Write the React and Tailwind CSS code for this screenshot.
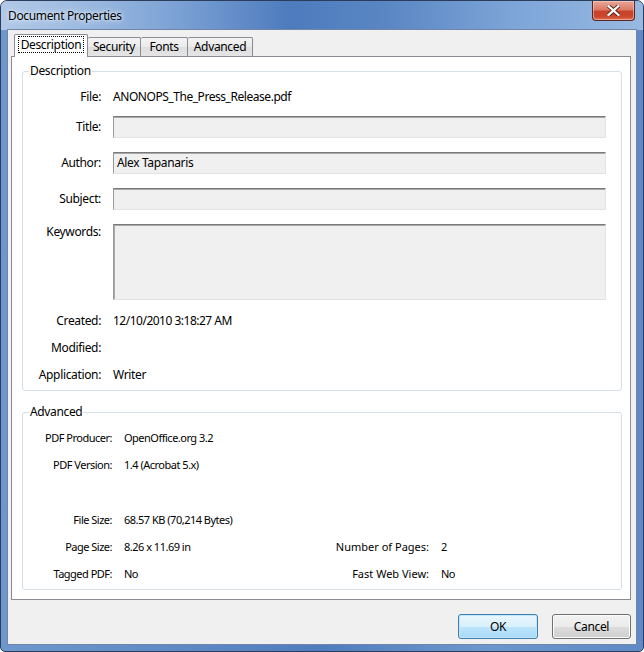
export default function App() {
  const inputCls =
    "h-[22px] flex-1 border border-t-[#7a7a7a] border-l-[#9a9a9a] border-r-[#e3e3e3] border-b-[#e3e3e3] bg-[#f0f0f0] shadow-[inset_0_1px_0_#a8a8a8] pl-[3px] flex items-center";
  return (
    <div className="w-[644px] h-[652px] bg-white font-['Noto_Sans','Open_Sans',sans-serif] text-[12px] leading-[16px] tracking-[-0.35px] text-black">
      <div className="flex h-[652px] w-[644px] flex-col rounded-t-[7px] rounded-b-[5px] border border-[#2c3d5c] bg-[linear-gradient(90deg,#6f97cd_0%,#5d88c4_30%,#4f7cbd_50%,#6c96cd_75%,#5f8ac6_100%)]">
        {/* title bar */}
        <div className="flex h-[29px] items-start justify-between rounded-t-[6px] bg-[linear-gradient(90deg,#b2c9e6_0%,#98b7df_15%,#7aa0d4_28%,#4d7bbd_45%,#5a86c3_60%,#7da5d8_80%,#98b9e1_100%)] pl-[7px]">
          <div className="self-center text-[12px] leading-[16px] text-black [text-shadow:0_0_6px_#e8f0fa,0_0_3px_#e8f0fa]">
            Document Properties
          </div>
          <div className="mr-[8px] flex h-[20px] w-[43px] items-center justify-center rounded-b-[4px] border border-t-0 border-[#5a2720] bg-[linear-gradient(180deg,#e9a898_0%,#db7b66_45%,#c7432b_55%,#c9452c_80%,#dc6f55_100%)] shadow-[inset_0_0_0_1px_rgba(255,220,210,0.5)]">
            <svg width="13" height="11" viewBox="0 0 13 11">
              <path
                d="M1.5 1 L11.5 10 M11.5 1 L1.5 10"
                stroke="#5a1d14"
                strokeWidth="4"
                strokeLinecap="square"
              />
              <path
                d="M1.5 1 L11.5 10 M11.5 1 L1.5 10"
                stroke="#ffffff"
                strokeWidth="2.2"
                strokeLinecap="square"
              />
            </svg>
          </div>
        </div>
        {/* client */}
        <div className="mx-[7px] flex h-[614px] flex-col bg-[#f0f0f0] pl-[3px] pr-[5px] pt-[4px] shadow-[0_0_0_1px_#6f86a8]">
          {/* tabs */}
          <div className="relative z-10 flex h-[22px] items-end pl-[3px]">
            <div className="mb-[-1px] flex h-[23px] w-[74px] items-start justify-center rounded-t-[2px] border border-b-0 border-[#898c95] bg-white pt-[1px]">
              <span className="border border-dotted border-black px-[2px] leading-[15px]">
                Description
              </span>
            </div>
            <div className="flex h-[19px] w-[53px] items-center justify-center rounded-t-[2px] border border-b-0 border-l-0 border-[#898c95] bg-[linear-gradient(180deg,#f3f3f3_0%,#ebebeb_50%,#dedede_51%,#e5e5e5_100%)]">
              Security
            </div>
            <div className="flex h-[19px] w-[47px] items-center justify-center rounded-t-[2px] border border-b-0 border-l-0 border-[#898c95] bg-[linear-gradient(180deg,#f3f3f3_0%,#ebebeb_50%,#dedede_51%,#e5e5e5_100%)]">
              Fonts
            </div>
            <div className="flex h-[19px] w-[65px] items-center justify-center rounded-t-[2px] border border-b-0 border-l-0 border-[#898c95] bg-[linear-gradient(180deg,#f3f3f3_0%,#ebebeb_50%,#dedede_51%,#e5e5e5_100%)]">
              Advanced
            </div>
          </div>
          {/* panel */}
          <div className="flex h-[544px] flex-col border border-[#898c95] bg-white pl-[10px] pr-[8px] pt-[6px]">
            <fieldset className="rounded-[3px] border border-[#d5dfe5]">
              <legend className="ml-[6px] px-[1px] leading-[16px]">Description</legend>
              <div className="flex flex-col pb-[7px] pr-[15px] pt-[10px]">
                <div className="flex h-[16px]">
                  <div className="w-[78px] text-right">File:</div>
                  <div className="ml-[12px] tracking-[-0.45px]">ANONOPS_The_Press_Release.pdf</div>
                </div>
                <div className="mt-[11px] flex h-[22px] items-center">
                  <div className="w-[78px] text-right">Title:</div>
                  <div className={"ml-[12px] " + inputCls}></div>
                </div>
                <div className="mt-[14px] flex h-[22px] items-center">
                  <div className="w-[78px] text-right">Author:</div>
                  <div className={"ml-[12px] " + inputCls}>Alex Tapanaris</div>
                </div>
                <div className="mt-[14px] flex h-[22px] items-center">
                  <div className="w-[78px] text-right">Subject:</div>
                  <div className={"ml-[12px] " + inputCls}></div>
                </div>
                <div className="mt-[14px] flex items-start">
                  <div className="w-[78px] text-right">Keywords:</div>
                  <div className="ml-[12px] h-[76px] flex-1 border border-t-[#7a7a7a] border-l-[#9a9a9a] border-r-[#e3e3e3] border-b-[#e3e3e3] bg-[#f0f0f0] shadow-[inset_1px_1px_0_#a8a8a8]"></div>
                </div>
                <div className="mt-[13px] flex h-[16px]">
                  <div className="w-[78px] text-right">Created:</div>
                  <div className="ml-[12px] tracking-[-0.5px]">12/10/2010 3:18:27 AM</div>
                </div>
                <div className="mt-[11px] flex h-[16px]">
                  <div className="w-[78px] text-right">Modified:</div>
                  <div className="ml-[12px]"></div>
                </div>
                <div className="mt-[11px] flex h-[16px]">
                  <div className="w-[78px] text-right">Application:</div>
                  <div className="ml-[12px]">Writer</div>
                </div>
              </div>
            </fieldset>
            <fieldset className="mt-[13px] rounded-[3px] border border-[#d5dfe5]">
              <legend className="ml-[6px] px-[1px] leading-[16px]">Advanced</legend>
              <div className="flex flex-col pb-[7px] pt-[10px] text-[11px] tracking-[-0.5px]">
                <div className="flex h-[16px]">
                  <div className="w-[89px] text-right">PDF Producer:</div>
                  <div className="ml-[12px]">OpenOffice.org 3.2</div>
                </div>
                <div className="mt-[11px] flex h-[16px]">
                  <div className="w-[89px] text-right">PDF Version:</div>
                  <div className="ml-[12px]">1.4 (Acrobat 5.x)</div>
                </div>
                <div className="mt-[39px] flex h-[16px]">
                  <div className="w-[89px] text-right">File Size:</div>
                  <div className="ml-[12px]">68.57 KB (70,214 Bytes)</div>
                </div>
                <div className="mt-[11px] flex h-[16px]">
                  <div className="w-[89px] text-right">Page Size:</div>
                  <div className="ml-[12px] w-[185px]">8.26 x 11.69 in</div>
                  <div className="w-[120px] text-right tracking-[0px]">Number of Pages:</div>
                  <div className="ml-[12px]">2</div>
                </div>
                <div className="mt-[11px] flex h-[16px]">
                  <div className="w-[89px] text-right">Tagged PDF:</div>
                  <div className="ml-[12px] w-[185px]">No</div>
                  <div className="w-[120px] text-right tracking-[0px]">Fast Web View:</div>
                  <div className="ml-[12px]">No</div>
                </div>
              </div>
            </fieldset>
          </div>
          {/* buttons */}
          <div className="mt-[14px] flex justify-end gap-[14px]">
            <button className="flex h-[25px] w-[80px] items-center justify-center rounded-[3px] border border-[#3c7fb1] bg-[linear-gradient(180deg,#eaf6fd_0%,#d9f0fc_50%,#bee6fd_51%,#a7d9f5_100%)] shadow-[inset_0_0_0_1px_#c6e6fa] text-[12px]">
              OK
            </button>
            <button className="flex h-[25px] w-[79px] items-center justify-center rounded-[3px] border border-[#707070] bg-[linear-gradient(180deg,#f2f2f2_0%,#ebebeb_50%,#dddddd_51%,#cfcfcf_100%)] shadow-[inset_0_0_0_1px_#fcfcfc] text-[12px]">
              Cancel
            </button>
          </div>
        </div>
      </div>
    </div>
  );
}
